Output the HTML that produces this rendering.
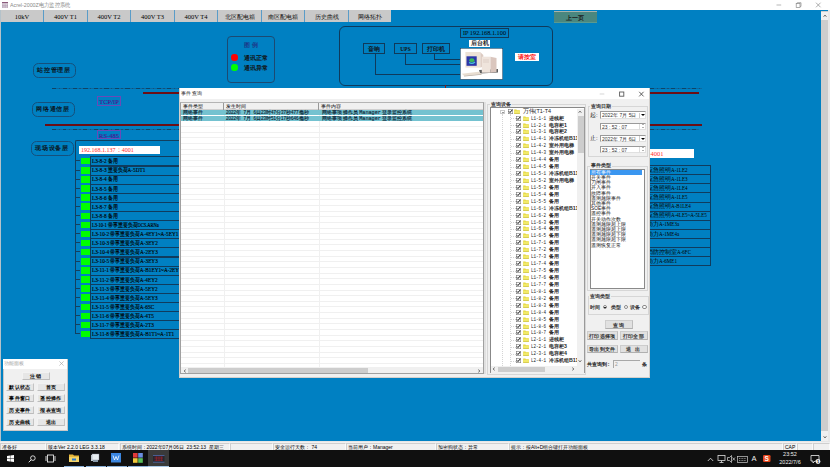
<!DOCTYPE html>
<html><head><meta charset="utf-8">
<style>
*{margin:0;padding:0;box-sizing:border-box}
html,body{width:830px;height:467px;overflow:hidden;background:#0080c2;font-family:"Liberation Sans",sans-serif;position:relative;font-weight:600}
.a{position:absolute}
.t{position:absolute;white-space:nowrap;line-height:1}
#title{left:0;top:0;width:830px;height:10px;background:#fff}
#tabs{left:0;top:10px;width:391px;height:12px;background:#c9c9c9}
.tab{position:absolute;top:0;height:12px;border-left:1px solid #5a9cc8;font-family:"Liberation Serif",serif;font-size:6.5px;color:#000;text-align:center;line-height:14px;font-weight:normal}
#vscroll{left:821px;top:10.5px;width:7px;height:431px;background:#cdcdcd}
#status{left:0;top:441px;width:830px;height:8.5px;background:#f0f0f0;border-top:1px solid #e6e6e6}
.sp{position:absolute;top:0.5px;height:7px;border-top:1px solid #cfcfcf;border-left:1px solid #cfcfcf;border-right:1px solid #fafafa;font-size:5px;color:#000;line-height:6px;padding-left:1px;white-space:nowrap;font-weight:normal}
#taskbar{left:0;top:449.5px;width:830px;height:17.5px;background:#101010}
.pill{position:absolute;border:1px solid #15507c;border-radius:5.5px;font-size:6px;color:#0a1420;text-align:center;letter-spacing:0.8px;font-weight:bold}
.dash{position:absolute;height:1px;background:repeating-linear-gradient(90deg,#0f4466 0 4px,#0a6aa2 4px 6.5px,#14507a 6.5px 7.8px,#0a6aa2 7.8px 10.5px)}
.red{position:absolute;height:2px;background:#6c0e14}
.pbox{position:absolute;border:1px solid #6a4ab8;font-family:"Liberation Serif",serif;font-size:6.5px;color:#4a1890;text-align:center;line-height:9px;font-weight:normal;-webkit-text-stroke:0.15px #4a1890}
.gsq{position:absolute;left:81px;width:8.5px;height:6.5px;background:#00ff00}
.row{position:absolute;left:90px;width:92px;height:10.1px;border:1px solid #103c5e;font-family:"Liberation Serif",serif;font-size:6.4px;color:#000;line-height:8px;white-space:nowrap;overflow:hidden;font-weight:normal}
.row span{position:absolute;left:0.6px;top:-0.2px;transform:scaleX(0.82);transform-origin:0 0;-webkit-text-stroke:0.15px #000}
.rrow{position:absolute;left:620px;width:90.5px;height:10.06px;border:1px solid #103c5e;font-family:"Liberation Serif",serif;font-size:7px;color:#000;line-height:8px;white-space:nowrap;overflow:hidden;font-weight:normal}
.rrow span{position:absolute;left:26px;top:-0.2px}
.rrow .cj{font-family:"Liberation Sans",sans-serif;font-size:6px;font-weight:normal}
.rrow .la{display:inline-block;font-weight:normal;font-size:7px;transform:scaleX(0.72);transform-origin:0 0}
.box{position:absolute;border:1px solid #103a5a;font-size:5.5px;color:#111;text-align:center}
#dlg{left:179px;top:88px;width:471px;height:290px;background:#f0f0f0;border:1px solid #d4d0cc;border-top:none}
.btn{position:absolute;background:#e1e1e1;border:1px solid #cdcdcd;border-bottom-color:#b0b0b0;border-right-color:#bdbdbd;font-size:5px;letter-spacing:0.4px;color:#2a2a2a;text-align:center;line-height:7px;white-space:nowrap;font-weight:600}
.tr{position:absolute;left:495px;height:7px;width:82px;font-size:5.5px;line-height:7px;color:#111;white-space:nowrap;overflow:hidden}
.tr .hl{position:absolute;left:15.5px;top:3.5px;width:5px;height:0;border-top:0.8px dotted #d4d4d4}
.tr .cb{position:absolute;left:21.2px;top:1px;width:5px;height:5px}
.tr .fd{position:absolute;left:27.6px;top:1px;width:6px;height:5px}
.tr span{position:absolute;left:36px;top:0}
.tr .c{font-family:"Liberation Mono",monospace;font-size:6px;left:36px;font-weight:normal;color:#222;transform:scaleX(0.7);transform-origin:0 0}
.tr .n{left:54px;font-size:5.3px;font-weight:600;color:#2a2a2a}
.ev{position:absolute;left:590px;width:52px;height:5px;font-size:4.8px;line-height:5px;color:#111;font-weight:normal;white-space:nowrap;padding-left:1px}
.ev.sel{background:#3a96f0;color:#fff}
.inp.di{width:45.5px;height:7.5px;border-top:1px solid #9a9a9a;border-left:1px solid #9a9a9a;border-right:1px solid #e0e0e0;border-bottom:1px solid #e0e0e0;font-size:5px;line-height:6px;color:#333}
.di .dd{position:absolute;left:38px;top:0.3px;width:6px;height:5.5px;background:#fff;border-left:0.5px solid #ccc}
.di .dd:after{content:"";position:absolute;left:1px;top:1.8px;border-left:2px solid transparent;border-right:2px solid transparent;border-top:2.2px solid #000}
.di .sp2{position:absolute;left:38px;top:0;width:6px;height:6px;border-left:0.5px solid #ddd}
.di .sp2:before{content:"";position:absolute;left:1.5px;top:0.6px;border-left:1.4px solid transparent;border-right:1.4px solid transparent;border-bottom:1.4px solid #666}
.di .sp2:after{content:"";position:absolute;left:1.5px;top:3.6px;border-left:1.4px solid transparent;border-right:1.4px solid transparent;border-top:1.4px solid #666}
.rad{position:absolute;top:304.8px;width:4.5px;height:4.5px;border-radius:50%;border:0.6px solid #8a8a8a;background:#fff}
.rad i{position:absolute;left:0.9px;top:0.9px;width:1.6px;height:1.6px;border-radius:50%;background:#111}
.grp{position:absolute;border:1px solid #d6d6d6}
.gl{position:absolute;font-size:5.5px;color:#333;background:#f0f0f0;padding:0 1px;line-height:6px;white-space:nowrap;font-weight:600}
.inp{position:absolute;background:#fff;border:1px solid #8a8a8a;font-size:5px;color:#222;line-height:6px;padding-left:1px;white-space:nowrap;font-weight:normal}
.fb{position:absolute;background:#e6e6e6;border:1px solid #f2f2f2;border-bottom-color:#bcbcbc;border-right-color:#c4c4c4;font-size:5px;letter-spacing:0.45px;color:#000;text-align:center;line-height:7px;white-space:nowrap;font-weight:600}
</style></head><body>
<svg width="0" height="0" style="position:absolute"><defs>
<symbol id="ck" viewBox="0 0 5 5"><rect x="0.3" y="0.3" width="4.4" height="4.4" fill="#fff" stroke="#7a7a7a" stroke-width="0.6"/><path d="M0.9 2.4 L2 3.5 L4.1 1.1" stroke="#000" stroke-width="1" fill="none" stroke-linejoin="miter"/></symbol>
<symbol id="fd" viewBox="0 0 6 5"><path d="M0.2 0.6 H2.4 L3 1.2 H5.8 V4.8 H0.2Z" fill="#e2d23a"/><rect x="0.2" y="1.6" width="5.6" height="3.2" fill="#f2ea6a"/><path d="M0.2 4.8 H5.8" stroke="#a89a28" stroke-width="0.5"/></symbol>
</defs></svg>
<div id="title" class="a">
  <svg class="a" style="left:1.5px;top:2px" width="6" height="6" viewBox="0 0 6 6"><rect x="0" y="0" width="6" height="6" fill="#ece4ec"/><rect x="0" y="0" width="6" height="1.2" fill="#8a5a7a"/><path d="M0.3 1.5 V6 M2 1.5 V6 M3.8 1.5 V6 M5.6 1.5 V6 M0 3.3 H6 M0 5 H6" stroke="#a08aa0" stroke-width="0.5"/></svg>
  <div class="t" style="left:10px;top:2px;font-size:6px;color:#8a8a8a;font-weight:normal;transform:scaleX(0.88);transform-origin:0 0">Acrel-2000Z电力监控系统</div>
  <svg class="a" style="left:776px;top:1.5px" width="46" height="7" viewBox="0 0 46 7"><path d="M0.5 3 H5.2" stroke="#9a9a9a" stroke-width="0.7"/><rect x="20.2" y="1.6" width="3.8" height="3.8" fill="none" stroke="#8a8a8a" stroke-width="0.7"/><path d="M21.3 1.6 V0.7 H25 V4.4 H24" fill="none" stroke="#8a8a8a" stroke-width="0.7"/><path d="M40 0.7 L44.6 5.3 M44.6 0.7 L40 5.3" stroke="#8a8a8a" stroke-width="0.7"/></svg>
</div>
<div id="tabs" class="a">
  <div class="tab" style="left:0;width:43px;border-left:1px solid #333">10kV</div>
  <div class="tab" style="left:43px;width:44px">400V T1</div>
  <div class="tab" style="left:87px;width:43px">400V T2</div>
  <div class="tab" style="left:130px;width:44px">400V T3</div>
  <div class="tab" style="left:174px;width:43px">400V T4</div>
  <div class="tab" style="left:217px;width:44px;font-size:6px;color:#111">北区配电箱</div>
  <div class="tab" style="left:261px;width:43px;font-size:6px;color:#111">南区配电箱</div>
  <div class="tab" style="left:304px;width:44px;font-size:6px;color:#111">历史曲线</div>
  <div class="tab" style="left:348px;width:43px;font-size:6px;color:#111">网络拓扑</div>
</div>
<div class="a" style="left:0;top:10px;width:1px;height:431px;background:#b4c2ca"></div>
<div id="vscroll" class="a"><div class="a" style="left:0;top:1px;width:7px;height:8px;background:#f0f0f0"></div><svg class="a" style="left:1.5px;top:3px" width="4" height="4" viewBox="0 0 4 4"><path d="M0.6 2.8 L2 1 L3.4 2.8" stroke="#505050" stroke-width="0.8" fill="none"/></svg></div>
<div class="a" style="left:828px;top:10px;width:2px;height:432px;background:#e8e8e8"></div>
<div class="a" style="left:821px;top:430.5px;width:7px;height:10.5px;background:#f0f0f0"><svg class="a" style="left:1.5px;top:4.5px" width="4" height="4" viewBox="0 0 4 4"><path d="M0.6 1.2 L2 3 L3.4 1.2" stroke="#505050" stroke-width="0.8" fill="none"/></svg></div>

<!-- upper page button -->
<div class="a" style="left:553.5px;top:10.5px;width:43px;height:12px;background:#4a877f;border-top:1px solid #a9b3ad;border-bottom:1px solid #5a9a90;font-size:6px;color:#1a1a1a;text-align:center;line-height:13px">上一页</div>

<!-- legend -->
<div class="a" style="left:227px;top:36px;width:48px;height:47px;border:1px solid #1c4a72;border-radius:4px"></div>
<div class="t" style="left:244px;top:42px;font-size:6px;color:#1c3a8a">图 例</div>
<div class="a" style="left:231.3px;top:54.2px;width:6.5px;height:6.5px;border-radius:50%;background:#ff0000"></div>
<div class="a" style="left:231.3px;top:64.2px;width:6.5px;height:6.5px;border-radius:50%;background:#00ff00"></div>
<div class="t" style="left:244px;top:55px;font-size:6px;color:#111">通讯正常</div>
<div class="t" style="left:244px;top:65px;font-size:6px;color:#111">通讯异常</div>

<!-- big network box -->
<div class="a" style="left:339px;top:26px;width:214px;height:60px;border:1px solid #0f3a5c;border-radius:6px"></div>
<div class="box" style="left:460px;top:28px;width:49px;height:10px;font-family:'Liberation Serif',serif;font-size:6.3px;line-height:8.5px;font-weight:normal;color:#000">IP 192.168.1.100</div>
<div class="a" style="left:469px;top:39.5px;width:21px;height:7px;background:#fff;font-size:5.5px;color:#111;text-align:center;line-height:7px">后台机</div>
<div class="box" style="left:363px;top:42.5px;width:22px;height:11px;line-height:10px">音响</div>
<div class="box" style="left:394px;top:42.5px;width:23px;height:11px;line-height:10px;font-family:'Liberation Serif',serif">UPS</div>
<div class="box" style="left:421.5px;top:42.5px;width:28px;height:11px;line-height:10px">打印机</div>
<div class="a" style="left:375px;top:53.5px;width:1px;height:21px;background:#0f3a5c"></div>
<div class="a" style="left:375px;top:74px;width:85px;height:1px;background:#0f3a5c"></div>
<div class="a" style="left:405px;top:53.5px;width:1px;height:11px;background:#0f3a5c"></div>
<div class="a" style="left:405px;top:64px;width:55px;height:1px;background:#0f3a5c"></div>
<div class="a" style="left:434px;top:53.5px;width:1px;height:6px;background:#0f3a5c"></div>
<div class="a" style="left:434px;top:59px;width:26px;height:1px;background:#0f3a5c"></div>
<!-- computer icon -->
<svg class="a" style="left:459.5px;top:47.5px" width="43" height="32" viewBox="0 0 43 32">
  <rect x="0.2" y="0.2" width="42.6" height="31.4" fill="#fff" stroke="#0a3050" stroke-width="0.6"/>
  <path d="M19 22 L38 21 L38 24.5 L20 25.5Z" fill="#2a2a2a" opacity="0.75"/>
  <rect x="5.4" y="4" width="15" height="15.6" fill="#ece2d6"/>
  <path d="M20.4 4.3 L23.3 7 L23.3 18.5 L20.4 19.6Z" fill="#dccbc2"/>
  <rect x="6.5" y="8.3" width="10.2" height="9.5" fill="#2a36a8"/>
  <ellipse cx="11.8" cy="12.3" rx="2.6" ry="2" fill="#3cb85a"/>
  <path d="M9 14.5 Q12 16.5 15 14" stroke="#48c8d8" stroke-width="1.2" fill="none"/>
  <rect x="21.8" y="8.7" width="8.7" height="16" fill="#efe4dc"/>
  <path d="M30.5 8.7 L36.5 10 L36.5 24 L30.5 24.7Z" fill="#dac6be"/>
  <path d="M23 12 H29 M23 14 H29" stroke="#cbbab2" stroke-width="0.5"/>
  <path d="M1.8 25.8 L18.5 23.8 L21.5 26 L4 27.8Z" fill="#e8ddd0"/>
  <path d="M4 27.8 L21.5 26 L21.5 26.8 L4.2 28.6Z" fill="#b8aca0"/>
</svg>
<div class="a" style="left:515px;top:52.5px;width:24px;height:8px;background:#fff;font-size:5.5px;color:#ff1010;text-align:center;line-height:8px">请按室</div>
<div class="a" style="left:445px;top:85px;width:1px;height:3px;background:#8a1a1a"></div>

<!-- layer pills -->
<div class="pill" style="left:32.5px;top:63px;width:43px;height:15px;line-height:13px">站控管理层</div>
<div class="pill" style="left:31.5px;top:102px;width:43px;height:15px;line-height:13px">网络通信层</div>
<div class="pill" style="left:30.5px;top:140.5px;width:43px;height:15px;line-height:13px">现场设备层</div>

<div class="dash" style="left:52px;top:87.5px;width:650px"></div>
<div class="dash" style="left:52px;top:128.5px;width:647px"></div>
<div class="red" style="left:143px;top:92.3px;width:556px"></div>
<div class="red" style="left:45px;top:124px;width:657px"></div>
<div class="pbox" style="left:97px;top:96px;width:24px;height:9.5px">TCP/IP</div>
<div class="pbox" style="left:97px;top:129.5px;width:24px;height:9.5px">RS-485</div>

<!-- left device panel -->
<div class="a" style="left:75px;top:140px;width:110px;height:194px;border-left:1px solid #12405f;border-top:1px solid #12405f;border-radius:2px 0 0 0"></div>
<div class="a" style="left:79px;top:145.8px;width:81px;height:8.5px;background:#fff;font-family:'Liberation Serif',serif;font-size:7px;color:#ff2a2a;line-height:9px;padding-left:1.5px;font-weight:normal"><span style="display:inline-block;transform:scaleX(0.86);transform-origin:0 0">192.168.1.137：4001</span></div>
<div class="a" style="left:76px;top:160.40px;width:4px;height:1px;background:#14405f"></div>
<div class="gsq" style="top:157.90px"></div>
<div class="row" style="top:156.40px"><span>L3-8-2 备用</span></div>
<div class="a" style="left:76px;top:169.50px;width:4px;height:1px;background:#14405f"></div>
<div class="gsq" style="top:167.00px"></div>
<div class="row" style="top:165.50px"><span>L3-8-3 重要负荷A-5DT1</span></div>
<div class="a" style="left:76px;top:178.60px;width:4px;height:1px;background:#14405f"></div>
<div class="gsq" style="top:176.10px"></div>
<div class="row" style="top:174.60px"><span>L3-8-4 备用</span></div>
<div class="a" style="left:76px;top:187.70px;width:4px;height:1px;background:#14405f"></div>
<div class="gsq" style="top:185.20px"></div>
<div class="row" style="top:183.70px"><span>L3-8-5 备用</span></div>
<div class="a" style="left:76px;top:196.80px;width:4px;height:1px;background:#14405f"></div>
<div class="gsq" style="top:194.30px"></div>
<div class="row" style="top:192.80px"><span>L3-8-6 备用</span></div>
<div class="a" style="left:76px;top:205.90px;width:4px;height:1px;background:#14405f"></div>
<div class="gsq" style="top:203.40px"></div>
<div class="row" style="top:201.90px"><span>L3-8-7 备用</span></div>
<div class="a" style="left:76px;top:215.00px;width:4px;height:1px;background:#14405f"></div>
<div class="gsq" style="top:212.50px"></div>
<div class="row" style="top:211.00px"><span>L3-8-8 备用</span></div>
<div class="a" style="left:76px;top:224.10px;width:4px;height:1px;background:#14405f"></div>
<div class="gsq" style="top:221.60px"></div>
<div class="row" style="top:220.10px;font-size:5.5px"><span style="top:0.3px">L3-10-1 带事重要负荷DCS.ARNa</span></div>
<div class="a" style="left:76px;top:233.20px;width:4px;height:1px;background:#14405f"></div>
<div class="gsq" style="top:230.70px"></div>
<div class="row" style="top:229.20px"><span>L3-10-2 带事重要负荷A-4EY1~A-5EY1</span></div>
<div class="a" style="left:76px;top:242.30px;width:4px;height:1px;background:#14405f"></div>
<div class="gsq" style="top:239.80px"></div>
<div class="row" style="top:238.30px"><span>L3-10-3 带事重要负荷A-3EY2</span></div>
<div class="a" style="left:76px;top:251.40px;width:4px;height:1px;background:#14405f"></div>
<div class="gsq" style="top:248.90px"></div>
<div class="row" style="top:247.40px"><span>L3-10-4 带事重要负荷A-2EY3</span></div>
<div class="a" style="left:76px;top:260.50px;width:4px;height:1px;background:#14405f"></div>
<div class="gsq" style="top:258.00px"></div>
<div class="row" style="top:256.50px"><span>L3-10-5 带事重要负荷A-3EY3</span></div>
<div class="a" style="left:76px;top:269.60px;width:4px;height:1px;background:#14405f"></div>
<div class="gsq" style="top:267.10px"></div>
<div class="row" style="top:265.60px"><span>L3-11-1 带事重要负荷A-B1EY1~A-2EY</span></div>
<div class="a" style="left:76px;top:278.70px;width:4px;height:1px;background:#14405f"></div>
<div class="gsq" style="top:276.20px"></div>
<div class="row" style="top:274.70px"><span>L3-11-2 带事重要负荷A-4EY2</span></div>
<div class="a" style="left:76px;top:287.80px;width:4px;height:1px;background:#14405f"></div>
<div class="gsq" style="top:285.30px"></div>
<div class="row" style="top:283.80px"><span>L3-11-3 带事重要负荷A-5EY2</span></div>
<div class="a" style="left:76px;top:296.90px;width:4px;height:1px;background:#14405f"></div>
<div class="gsq" style="top:294.40px"></div>
<div class="row" style="top:292.90px"><span>L3-11-4 带事重要负荷A-5EY3</span></div>
<div class="a" style="left:76px;top:306.00px;width:4px;height:1px;background:#14405f"></div>
<div class="gsq" style="top:303.50px"></div>
<div class="row" style="top:302.00px"><span>L3-11-5 带事重要负荷A-6SC</span></div>
<div class="a" style="left:76px;top:315.10px;width:4px;height:1px;background:#14405f"></div>
<div class="gsq" style="top:312.60px"></div>
<div class="row" style="top:311.10px"><span>L3-11-6 带事重要负荷A-4T5</span></div>
<div class="a" style="left:76px;top:324.20px;width:4px;height:1px;background:#14405f"></div>
<div class="gsq" style="top:321.70px"></div>
<div class="row" style="top:320.20px"><span>L3-11-7 带事重要负荷A-2T3</span></div>
<div class="a" style="left:76px;top:333.30px;width:4px;height:1px;background:#14405f"></div>
<div class="gsq" style="top:330.80px"></div>
<div class="row" style="top:329.30px"><span>L3-11-8 带事重要负荷A-B1T1~A-1T1</span></div>

<!-- right device panel -->
<div class="a" style="left:630px;top:149px;width:64px;height:9px;background:#fff;font-family:'Liberation Serif',serif;font-size:6.5px;color:#ff2a2a;line-height:9px;padding-left:20.5px;font-weight:normal">4001</div>
<div class="rrow" style="top:165.30px"><span><b class="cj">应急照明</b><b class="la">A-1LE2</b></span></div>
<div class="rrow" style="top:174.36px"><span><b class="cj">应急照明</b><b class="la">A-1LE3</b></span></div>
<div class="rrow" style="top:183.42px"><span><b class="cj">应急照明</b><b class="la">A-1LE4</b></span></div>
<div class="rrow" style="top:192.48px"><span><b class="cj">应急照明</b><b class="la">A-1LE5</b></span></div>
<div class="rrow" style="top:201.54px"><span><b class="cj">应急照明</b><b class="la">A-B1LE4</b></span></div>
<div class="rrow" style="top:210.60px"><span><b class="cj">应急照明</b><b class="la">A-4LE5~A-5LE5</b></span></div>
<div class="rrow" style="top:219.66px"><span><b class="cj">动力</b><b class="la">A-1ME3a</b></span></div>
<div class="rrow" style="top:228.72px"><span><b class="cj">动力</b><b class="la">A-1ME4a</b></span></div>
<div class="rrow" style="top:237.78px"><span><b class="cj"></b><b class="la"></b></span></div>
<div class="rrow" style="top:246.84px"><span><b class="cj">消防控制室</b><b class="la">A-6FC</b></span></div>
<div class="rrow" style="top:255.90px"><span><b class="cj">动力</b><b class="la">A-6ME1</b></span></div>

<!-- dialog -->
<div id="dlg" class="a">
  <div class="a" style="left:0;top:0;width:469px;height:11px;background:#fff"></div>
  <div class="t" style="left:1px;top:3px;font-size:5px;color:#222;font-weight:normal;letter-spacing:0.3px">事件查询</div>
  <svg class="a" style="left:419px;top:2.5px" width="46" height="7" viewBox="0 0 46 7"><path d="M0.7 3 H5.3" stroke="#c4c4c4" stroke-width="0.7"/><rect x="20.6" y="1" width="4.2" height="4.2" fill="none" stroke="#5a5a5a" stroke-width="0.9"/><path d="M40.2 0.8 L44.6 5.4 M44.6 0.8 L40.2 5.4" stroke="#3a3a3a" stroke-width="0.8"/></svg>
</div>
<!-- list control -->
<div class="a" style="left:180px;top:102px;width:304px;height:272px;background:#fff;border:1px solid #a0a0a0;border-top:1.5px solid #b4b4b4;overflow:hidden">
  <div class="a" style="left:0;top:0;width:302px;height:6.5px;background:#f0f0f0;border-bottom:1px solid #d0d0d0"></div>
  <div class="a" style="left:41.5px;top:0;width:1px;height:6.5px;background:#999"></div>
  <div class="a" style="left:137px;top:0;width:1px;height:6.5px;background:#999"></div>
  <div class="t" style="left:2px;top:1px;font-size:5px;color:#000;font-weight:normal">事件类型</div>
  <div class="t" style="left:45px;top:1px;font-size:5px;color:#000;font-weight:normal">发生时间</div>
  <div class="t" style="left:140px;top:1px;font-size:5px;color:#000;font-weight:normal">事件内容</div>
  <div class="a" style="left:0;top:23.20px;width:302px;height:1px;background:#f0f0f0"></div>
<div class="a" style="left:0;top:28.83px;width:302px;height:1px;background:#f0f0f0"></div>
<div class="a" style="left:0;top:34.47px;width:302px;height:1px;background:#f0f0f0"></div>
<div class="a" style="left:0;top:40.10px;width:302px;height:1px;background:#f0f0f0"></div>
<div class="a" style="left:0;top:45.73px;width:302px;height:1px;background:#f0f0f0"></div>
<div class="a" style="left:0;top:51.37px;width:302px;height:1px;background:#f0f0f0"></div>
<div class="a" style="left:0;top:57.00px;width:302px;height:1px;background:#f0f0f0"></div>
<div class="a" style="left:0;top:62.63px;width:302px;height:1px;background:#f0f0f0"></div>
<div class="a" style="left:0;top:68.26px;width:302px;height:1px;background:#f0f0f0"></div>
<div class="a" style="left:0;top:73.90px;width:302px;height:1px;background:#f0f0f0"></div>
<div class="a" style="left:0;top:79.53px;width:302px;height:1px;background:#f0f0f0"></div>
<div class="a" style="left:0;top:85.16px;width:302px;height:1px;background:#f0f0f0"></div>
<div class="a" style="left:0;top:90.80px;width:302px;height:1px;background:#f0f0f0"></div>
<div class="a" style="left:0;top:96.43px;width:302px;height:1px;background:#f0f0f0"></div>
<div class="a" style="left:0;top:102.06px;width:302px;height:1px;background:#f0f0f0"></div>
<div class="a" style="left:0;top:107.69px;width:302px;height:1px;background:#f0f0f0"></div>
<div class="a" style="left:0;top:113.33px;width:302px;height:1px;background:#f0f0f0"></div>
<div class="a" style="left:0;top:118.96px;width:302px;height:1px;background:#f0f0f0"></div>
<div class="a" style="left:0;top:124.59px;width:302px;height:1px;background:#f0f0f0"></div>
<div class="a" style="left:0;top:130.23px;width:302px;height:1px;background:#f0f0f0"></div>
<div class="a" style="left:0;top:135.86px;width:302px;height:1px;background:#f0f0f0"></div>
<div class="a" style="left:0;top:141.49px;width:302px;height:1px;background:#f0f0f0"></div>
<div class="a" style="left:0;top:147.13px;width:302px;height:1px;background:#f0f0f0"></div>
<div class="a" style="left:0;top:152.76px;width:302px;height:1px;background:#f0f0f0"></div>
<div class="a" style="left:0;top:158.39px;width:302px;height:1px;background:#f0f0f0"></div>
<div class="a" style="left:0;top:164.03px;width:302px;height:1px;background:#f0f0f0"></div>
<div class="a" style="left:0;top:169.66px;width:302px;height:1px;background:#f0f0f0"></div>
<div class="a" style="left:0;top:175.29px;width:302px;height:1px;background:#f0f0f0"></div>
<div class="a" style="left:0;top:180.92px;width:302px;height:1px;background:#f0f0f0"></div>
<div class="a" style="left:0;top:186.56px;width:302px;height:1px;background:#f0f0f0"></div>
<div class="a" style="left:0;top:192.19px;width:302px;height:1px;background:#f0f0f0"></div>
<div class="a" style="left:0;top:197.82px;width:302px;height:1px;background:#f0f0f0"></div>
<div class="a" style="left:0;top:203.46px;width:302px;height:1px;background:#f0f0f0"></div>
<div class="a" style="left:0;top:209.09px;width:302px;height:1px;background:#f0f0f0"></div>
<div class="a" style="left:0;top:214.72px;width:302px;height:1px;background:#f0f0f0"></div>
<div class="a" style="left:0;top:220.36px;width:302px;height:1px;background:#f0f0f0"></div>
<div class="a" style="left:0;top:225.99px;width:302px;height:1px;background:#f0f0f0"></div>
<div class="a" style="left:0;top:231.62px;width:302px;height:1px;background:#f0f0f0"></div>
<div class="a" style="left:0;top:237.25px;width:302px;height:1px;background:#f0f0f0"></div>
<div class="a" style="left:0;top:242.89px;width:302px;height:1px;background:#f0f0f0"></div>
<div class="a" style="left:0;top:248.52px;width:302px;height:1px;background:#f0f0f0"></div>
<div class="a" style="left:0;top:254.15px;width:302px;height:1px;background:#f0f0f0"></div>
<div class="a" style="left:0;top:259.79px;width:302px;height:1px;background:#f0f0f0"></div>
  <div class="a" style="left:42.5px;top:7px;width:1px;height:257px;background:#f0f0f0"></div>
  <div class="a" style="left:137.5px;top:7px;width:1px;height:257px;background:#f0f0f0"></div>
  <div class="a" style="left:0;top:7.3px;width:302px;height:5.2px;background:#74c2d0"></div>
  <div class="a" style="left:0;top:13.2px;width:302px;height:5.2px;background:#74c2d0"></div>
  <div class="t" style="left:2px;top:7.7px;font-size:4.8px;color:#0c2434;font-weight:normal;-webkit-text-stroke:0.12px #0c2434">网络事件</div>
  <div class="t" style="left:2px;top:13.5px;font-size:4.8px;color:#0c2434;font-weight:normal;-webkit-text-stroke:0.12px #0c2434">网络事件</div>
  <div class="t" style="left:45px;top:7.7px;font-size:4.5px;color:#0c2434;font-weight:normal;-webkit-text-stroke:0.12px #0c2434">2022年 &nbsp;7月 &nbsp;6日23时47分37秒477毫秒</div>
  <div class="t" style="left:45px;top:13.5px;font-size:4.5px;color:#0c2434;font-weight:normal;-webkit-text-stroke:0.12px #0c2434">2022年 &nbsp;7月 &nbsp;6日23时51分17秒646毫秒</div>
  <div class="t" style="left:140.5px;top:7.7px;font-size:4.8px;color:#0c2434;font-weight:normal;-webkit-text-stroke:0.12px #0c2434">网络事项 操作员 <span style="font-family:'Liberation Mono',monospace;font-size:5.2px">Manager</span> 登录监控系统</div>
  <div class="t" style="left:140.5px;top:13.5px;font-size:4.8px;color:#0c2434;font-weight:normal;-webkit-text-stroke:0.12px #0c2434">网络事项 操作员 <span style="font-family:'Liberation Mono',monospace;font-size:5.2px">Manager</span> 登录监控系统</div>
  <!-- h scroll -->
  <div class="a" style="left:0;top:264px;width:302px;height:7px;background:#f0f0f0"></div>
  <div class="a" style="left:7px;top:265px;width:180px;height:5px;background:#cdcdcd"></div>
  <svg class="a" style="left:1.5px;top:265.5px" width="4" height="4" viewBox="0 0 4 4"><path d="M2.8 0.6 L1 2 L2.8 3.4" stroke="#606060" stroke-width="0.8" fill="none"/></svg>
  <svg class="a" style="left:296px;top:265.5px" width="4" height="4" viewBox="0 0 4 4"><path d="M1.2 0.6 L3 2 L1.2 3.4" stroke="#606060" stroke-width="0.8" fill="none"/></svg>
</div>
<div class="a" style="left:484px;top:102px;width:2px;height:272px;background:#e0e0e0"></div>

<!-- device tree group -->
<div class="grp" style="left:486.5px;top:103.5px;width:99px;height:271px"></div>
<div class="gl" style="left:489.5px;top:100.8px;font-size:5px">查询设备</div>
<div class="a" style="left:489.5px;top:107px;width:95px;height:266px;background:#fff;border:1px solid #9a9a9a;border-left:1.5px solid #888;border-top:1.5px solid #888;overflow:hidden"></div>
<div class="a" style="left:500px;top:109.5px;width:4.6px;height:4.4px;border:0.6px solid #cacaca;background:#fff"><div class="a" style="left:1px;top:1.6px;width:2px;height:0.6px;background:#999"></div></div>
<div class="a" style="left:502px;top:114px;width:0;height:252px;border-left:0.8px dotted #d4d4d4"></div>
<div class="a" style="left:510.4px;top:114px;width:0;height:252px;border-left:0.8px dotted #d4d4d4"></div>
<div class="tr" style="top:107.8px"><svg class="cb" style="left:13.2px"><use href="#ck"/></svg><svg class="fd" style="left:19.3px"><use href="#fd"/></svg><span style="left:27.6px;font-weight:normal;font-size:5.5px;color:#222">万伟(T1-T4</span></div>
<div class="tr" style="top:114.60px"><i class="hl"></i><svg class="cb"><use href="#ck"/></svg><svg class="fd"><use href="#fd"/></svg><span class="c">L1-1-1</span><span class="n">进线柜</span></div>
<div class="tr" style="top:121.53px"><i class="hl"></i><svg class="cb"><use href="#ck"/></svg><svg class="fd"><use href="#fd"/></svg><span class="c">L1-2-1</span><span class="n">电容柜1</span></div>
<div class="tr" style="top:128.46px"><i class="hl"></i><svg class="cb"><use href="#ck"/></svg><svg class="fd"><use href="#fd"/></svg><span class="c">L1-3-1</span><span class="n">电容柜2</span></div>
<div class="tr" style="top:135.39px"><i class="hl"></i><svg class="cb"><use href="#ck"/></svg><svg class="fd"><use href="#fd"/></svg><span class="c">L1-4-1</span><span class="n">冷冻机组B11</span></div>
<div class="tr" style="top:142.32px"><i class="hl"></i><svg class="cb"><use href="#ck"/></svg><svg class="fd"><use href="#fd"/></svg><span class="c">L1-4-2</span><span class="n">室外用电梯</span></div>
<div class="tr" style="top:149.25px"><i class="hl"></i><svg class="cb"><use href="#ck"/></svg><svg class="fd"><use href="#fd"/></svg><span class="c">L1-4-3</span><span class="n">室外用电梯</span></div>
<div class="tr" style="top:156.18px"><i class="hl"></i><svg class="cb"><use href="#ck"/></svg><svg class="fd"><use href="#fd"/></svg><span class="c">L1-4-4</span><span class="n">备用</span></div>
<div class="tr" style="top:163.11px"><i class="hl"></i><svg class="cb"><use href="#ck"/></svg><svg class="fd"><use href="#fd"/></svg><span class="c">L1-4-5</span><span class="n">备用</span></div>
<div class="tr" style="top:170.04px"><i class="hl"></i><svg class="cb"><use href="#ck"/></svg><svg class="fd"><use href="#fd"/></svg><span class="c">L1-5-1</span><span class="n">冷冻机组B11</span></div>
<div class="tr" style="top:176.97px"><i class="hl"></i><svg class="cb"><use href="#ck"/></svg><svg class="fd"><use href="#fd"/></svg><span class="c">L1-5-2</span><span class="n">室外用电梯</span></div>
<div class="tr" style="top:183.90px"><i class="hl"></i><svg class="cb"><use href="#ck"/></svg><svg class="fd"><use href="#fd"/></svg><span class="c">L1-5-3</span><span class="n">备用</span></div>
<div class="tr" style="top:190.83px"><i class="hl"></i><svg class="cb"><use href="#ck"/></svg><svg class="fd"><use href="#fd"/></svg><span class="c">L1-5-4</span><span class="n">备用</span></div>
<div class="tr" style="top:197.76px"><i class="hl"></i><svg class="cb"><use href="#ck"/></svg><svg class="fd"><use href="#fd"/></svg><span class="c">L1-5-5</span><span class="n">备用</span></div>
<div class="tr" style="top:204.69px"><i class="hl"></i><svg class="cb"><use href="#ck"/></svg><svg class="fd"><use href="#fd"/></svg><span class="c">L1-6-1</span><span class="n">冷冻机组B11</span></div>
<div class="tr" style="top:211.62px"><i class="hl"></i><svg class="cb"><use href="#ck"/></svg><svg class="fd"><use href="#fd"/></svg><span class="c">L1-6-2</span><span class="n">备用</span></div>
<div class="tr" style="top:218.55px"><i class="hl"></i><svg class="cb"><use href="#ck"/></svg><svg class="fd"><use href="#fd"/></svg><span class="c">L1-6-3</span><span class="n">备用</span></div>
<div class="tr" style="top:225.48px"><i class="hl"></i><svg class="cb"><use href="#ck"/></svg><svg class="fd"><use href="#fd"/></svg><span class="c">L1-6-4</span><span class="n">备用</span></div>
<div class="tr" style="top:232.41px"><i class="hl"></i><svg class="cb"><use href="#ck"/></svg><svg class="fd"><use href="#fd"/></svg><span class="c">L1-6-5</span><span class="n">备用</span></div>
<div class="tr" style="top:239.34px"><i class="hl"></i><svg class="cb"><use href="#ck"/></svg><svg class="fd"><use href="#fd"/></svg><span class="c">L1-7-1</span><span class="n">备用</span></div>
<div class="tr" style="top:246.27px"><i class="hl"></i><svg class="cb"><use href="#ck"/></svg><svg class="fd"><use href="#fd"/></svg><span class="c">L1-7-2</span><span class="n">备用</span></div>
<div class="tr" style="top:253.20px"><i class="hl"></i><svg class="cb"><use href="#ck"/></svg><svg class="fd"><use href="#fd"/></svg><span class="c">L1-7-3</span><span class="n">备用</span></div>
<div class="tr" style="top:260.13px"><i class="hl"></i><svg class="cb"><use href="#ck"/></svg><svg class="fd"><use href="#fd"/></svg><span class="c">L1-7-4</span><span class="n">备用</span></div>
<div class="tr" style="top:267.06px"><i class="hl"></i><svg class="cb"><use href="#ck"/></svg><svg class="fd"><use href="#fd"/></svg><span class="c">L1-7-5</span><span class="n">备用</span></div>
<div class="tr" style="top:273.99px"><i class="hl"></i><svg class="cb"><use href="#ck"/></svg><svg class="fd"><use href="#fd"/></svg><span class="c">L1-7-6</span><span class="n">备用</span></div>
<div class="tr" style="top:280.92px"><i class="hl"></i><svg class="cb"><use href="#ck"/></svg><svg class="fd"><use href="#fd"/></svg><span class="c">L1-7-7</span><span class="n">备用</span></div>
<div class="tr" style="top:287.85px"><i class="hl"></i><svg class="cb"><use href="#ck"/></svg><svg class="fd"><use href="#fd"/></svg><span class="c">L1-8-1</span><span class="n">备用</span></div>
<div class="tr" style="top:294.78px"><i class="hl"></i><svg class="cb"><use href="#ck"/></svg><svg class="fd"><use href="#fd"/></svg><span class="c">L1-8-2</span><span class="n">备用</span></div>
<div class="tr" style="top:301.71px"><i class="hl"></i><svg class="cb"><use href="#ck"/></svg><svg class="fd"><use href="#fd"/></svg><span class="c">L1-8-3</span><span class="n">备用</span></div>
<div class="tr" style="top:308.64px"><i class="hl"></i><svg class="cb"><use href="#ck"/></svg><svg class="fd"><use href="#fd"/></svg><span class="c">L1-8-4</span><span class="n">备用</span></div>
<div class="tr" style="top:315.57px"><i class="hl"></i><svg class="cb"><use href="#ck"/></svg><svg class="fd"><use href="#fd"/></svg><span class="c">L1-8-5</span><span class="n">备用</span></div>
<div class="tr" style="top:322.50px"><i class="hl"></i><svg class="cb"><use href="#ck"/></svg><svg class="fd"><use href="#fd"/></svg><span class="c">L1-8-6</span><span class="n">备用</span></div>
<div class="tr" style="top:329.43px"><i class="hl"></i><svg class="cb"><use href="#ck"/></svg><svg class="fd"><use href="#fd"/></svg><span class="c">L1-8-7</span><span class="n">备用</span></div>
<div class="tr" style="top:336.36px"><i class="hl"></i><svg class="cb"><use href="#ck"/></svg><svg class="fd"><use href="#fd"/></svg><span class="c">L2-1-1</span><span class="n">进线柜</span></div>
<div class="tr" style="top:343.29px"><i class="hl"></i><svg class="cb"><use href="#ck"/></svg><svg class="fd"><use href="#fd"/></svg><span class="c">L2-2-1</span><span class="n">电容柜3</span></div>
<div class="tr" style="top:350.22px"><i class="hl"></i><svg class="cb"><use href="#ck"/></svg><svg class="fd"><use href="#fd"/></svg><span class="c">L2-3-1</span><span class="n">电容柜4</span></div>
<div class="tr" style="top:357.15px"><i class="hl"></i><svg class="cb"><use href="#ck"/></svg><svg class="fd"><use href="#fd"/></svg><span class="c">L2-4-1</span><span class="n">冷冻机组B11</span></div>
<!-- tree v scrollbar -->
<div class="a" style="left:577px;top:108.5px;width:7px;height:257px;background:#f0f0f0"></div>
<div class="a" style="left:577.5px;top:116px;width:6px;height:37px;background:#cdcdcd"></div>
<svg class="a" style="left:578.3px;top:110px" width="4" height="4" viewBox="0 0 4 4"><path d="M0.6 2.8 L2 1 L3.4 2.8" stroke="#606060" stroke-width="0.8" fill="none"/></svg>
<svg class="a" style="left:578.3px;top:359px" width="4" height="4" viewBox="0 0 4 4"><path d="M0.6 1.2 L2 3 L3.4 1.2" stroke="#606060" stroke-width="0.8" fill="none"/></svg>
<!-- tree h scrollbar -->
<div class="a" style="left:490.5px;top:365.5px;width:93px;height:7px;background:#f0f0f0"></div>
<div class="a" style="left:497.5px;top:366.5px;width:47px;height:5px;background:#cdcdcd"></div>
<svg class="a" style="left:492px;top:366.5px" width="4" height="4" viewBox="0 0 4 4"><path d="M2.8 0.6 L1 2 L2.8 3.4" stroke="#606060" stroke-width="0.8" fill="none"/></svg>
<svg class="a" style="left:571px;top:366.5px" width="4" height="4" viewBox="0 0 4 4"><path d="M1.2 0.6 L3 2 L1.2 3.4" stroke="#606060" stroke-width="0.8" fill="none"/></svg>

<!-- date group -->
<div class="grp" style="left:587.5px;top:105.5px;width:60px;height:51px"></div>
<div class="gl" style="left:589.5px;top:102.8px;font-size:5px">查询日期</div>
<div class="t" style="left:590px;top:112.3px;font-size:6px;color:#222;font-weight:normal">起:</div>
<div class="inp di" style="left:600px;top:111.3px">2022年 7月 5日<i class="dd"></i></div>
<div class="inp di" style="left:600px;top:122.5px">23 : 52 : 07<i class="sp2"></i></div>
<div class="t" style="left:590px;top:135.3px;font-size:6px;color:#222;font-weight:normal">止:</div>
<div class="inp di" style="left:600px;top:134.5px">2022年 7月 6日<i class="dd"></i></div>
<div class="inp di" style="left:600px;top:145.5px">23 : 52 : 07<i class="sp2"></i></div>

<!-- event type group -->
<div class="grp" style="left:587px;top:166px;width:61px;height:125px"></div>
<div class="gl" style="left:589.5px;top:162px;font-size:5px">事件类型</div>
<div class="a" style="left:589.5px;top:168.5px;width:55.5px;height:120px;background:#fff;border:1px solid #8a8a8a"></div>
<div class="ev sel" style="top:169.70px">所有事件</div>
<div class="ev" style="top:174.90px">开关事件</div>
<div class="ev" style="top:180.10px">刀闸事件</div>
<div class="ev" style="top:185.30px">开入事件</div>
<div class="ev" style="top:190.50px">故障事件</div>
<div class="ev" style="top:195.70px">遥测越限事件</div>
<div class="ev" style="top:200.90px">其他事件</div>
<div class="ev" style="top:206.10px">SOE事件</div>
<div class="ev" style="top:211.30px">遥控事件</div>
<div class="ev" style="top:216.50px">开关动作次数</div>
<div class="ev" style="top:221.70px">遥测越限超上限</div>
<div class="ev" style="top:226.90px">遥测越限超上限</div>
<div class="ev" style="top:232.10px">遥测越限超下限</div>
<div class="ev" style="top:237.30px">遥测越限超下限</div>
<div class="ev" style="top:242.50px">遥测恢复正常</div>

<!-- query type group -->
<div class="grp" style="left:587.5px;top:296px;width:61px;height:18.5px"></div>
<div class="gl" style="left:589px;top:293px;font-size:5px">查询类型</div>
<div class="t" style="left:590px;top:304.5px;font-size:5px;color:#333;font-weight:600">时间</div>
<div class="t" style="left:611px;top:304.5px;font-size:5px;color:#333;font-weight:600">类型</div>
<div class="t" style="left:630px;top:304.5px;font-size:5px;color:#333;font-weight:600">设备</div>
<div class="rad" style="left:602.5px"><i></i></div>
<div class="rad" style="left:623.5px"></div>
<div class="rad" style="left:642px"></div>

<div class="btn" style="left:604.5px;top:319.5px;width:28.5px;height:9px;line-height:8px">查询</div>
<div class="btn" style="left:587px;top:331px;width:30.5px;height:9px;line-height:8px">打印选择项</div>
<div class="btn" style="left:619.5px;top:331px;width:28px;height:9px;line-height:8px">打印全部</div>
<div class="btn" style="left:587px;top:344.5px;width:30.5px;height:8.5px;line-height:7.5px">导出到文件</div>
<div class="btn" style="left:619.5px;top:344.5px;width:28px;height:8.5px;line-height:7.5px">退 &nbsp;出</div>
<div class="t" style="left:586.5px;top:361.5px;font-size:5px;color:#111;font-weight:600;letter-spacing:0.3px">共查询到:</div>
<div class="a" style="left:613px;top:360.4px;width:27px;height:8px;background:#f0f0f0;border-top:1px solid #a8a8a8;border-left:1px solid #a8a8a8;font-size:5px;color:#999;line-height:7px;padding-left:1px;font-weight:normal">2</div>
<div class="t" style="left:642.3px;top:361.5px;font-size:5px;color:#222;font-weight:600">条</div>

<!-- function panel -->
<div class="a" style="left:2.5px;top:358.5px;width:65px;height:72.5px;background:#f0f0f0;border:1px solid #c8c8c8"></div>
<div class="a" style="left:3px;top:359px;width:64px;height:10px;background:#fff"></div>
<div class="t" style="left:4px;top:361.3px;font-size:5px;color:#9a9a9a;font-weight:normal">功能面板</div>
<svg class="a" style="left:58.5px;top:361px" width="5" height="5" viewBox="0 0 5 5"><path d="M0.4 0.4 L4.6 4.6 M4.6 0.4 L0.4 4.6" stroke="#a0a0a0" stroke-width="0.6"/></svg>
<div class="fb" style="left:21.5px;top:372px;width:28.5px;height:8px">注销</div>
<div class="fb" style="left:6px;top:382.5px;width:28px;height:8px">默认状态</div>
<div class="fb" style="left:37px;top:382.5px;width:28px;height:8px">首页</div>
<div class="fb" style="left:6px;top:394.2px;width:28px;height:8px">事件窗口</div>
<div class="fb" style="left:37px;top:394.2px;width:28px;height:8px">遥控操作</div>
<div class="fb" style="left:6px;top:406px;width:28px;height:8px">历史事件</div>
<div class="fb" style="left:37px;top:406px;width:28px;height:8px">报表查询</div>
<div class="fb" style="left:6px;top:418px;width:28px;height:8px">历史曲线</div>
<div class="fb" style="left:37px;top:418px;width:28px;height:8px">退出</div>

<!-- status bar -->
<div id="status" class="a">
  <div class="sp" style="left:0;width:46px">准备好</div>
  <div class="sp" style="left:46px;width:73px">版本Ver 2.2.0 LEG 3.3.18</div>
  <div class="sp" style="left:119.5px;width:110px">系统时间：2022年07月06日 &nbsp;23:52:13 &nbsp;星期三</div>
  <div class="sp" style="left:230px;width:43px"></div>
  <div class="sp" style="left:273px;width:73px">安全运行天数： 74</div>
  <div class="sp" style="left:346px;width:90px">当前用户：Manager</div>
  <div class="sp" style="left:436px;width:73px">加密狗状态：异常</div>
  <div class="sp" style="left:509px;width:274px">提示：按Alt+D组合键打开功能面板</div>
  <div class="sp" style="left:783px;width:14px">CAP</div>
  <div class="sp" style="left:797px;width:16px"></div>
  <div class="sp" style="left:813px;width:17px"></div>
</div>

<!-- taskbar -->
<div id="taskbar" class="a">
  <svg class="a" style="left:6.7px;top:5.8px" width="7" height="7" viewBox="0 0 9 9"><path d="M0 1.3 L3.8 0.7 V4.2 H0Z M4.3 0.6 L9 0 V4.2 H4.3Z M0 4.7 H3.8 V8.3 L0 7.7Z M4.3 4.7 H9 V9 L4.3 8.4Z" fill="#fff"/></svg>
  <svg class="a" style="left:27.5px;top:5px" width="8" height="8" viewBox="0 0 9 9"><circle cx="5.5" cy="3.5" r="2.6" stroke="#fff" stroke-width="0.9" fill="none"/><path d="M3.6 5.4 L0.8 8.2" stroke="#fff" stroke-width="1"/></svg>
  <svg class="a" style="left:45px;top:4px" width="11" height="9" viewBox="0 0 11 9"><rect x="2.5" y="1" width="6" height="7" stroke="#fff" stroke-width="0.8" fill="none"/><path d="M1 2 V7 M10 2 V7" stroke="#fff" stroke-width="0.8"/></svg>
  <svg class="a" style="left:69px;top:3px" width="10" height="10" viewBox="0 0 10 10"><path d="M0 1.5 H4 L5 2.5 H10 V9 H0Z" fill="#e8b83a"/><rect x="0" y="4" width="10" height="5" fill="#f5d468"/><rect x="3" y="5.5" width="4" height="2" fill="#2a7ad0"/></svg>
  <svg class="a" style="left:90px;top:3px" width="10" height="10" viewBox="0 0 10 10"><rect x="1" y="2" width="7" height="6" fill="#c8d4dc"/><rect x="2" y="1" width="7" height="6" fill="#e8eef2" stroke="#889" stroke-width="0.4"/><rect x="3" y="7" width="5" height="2" fill="#8899a8"/></svg>
  <svg class="a" style="left:111px;top:3.5px" width="10" height="10" viewBox="0 0 10 10"><rect x="0" y="0" width="10" height="9.5" fill="#3b86e0"/><path d="M2 2.5 L3.5 7 L5 3.5 L6.5 7 L8 2.5" stroke="#fff" stroke-width="0.8" fill="none"/></svg>
  <svg class="a" style="left:132.5px;top:3px" width="10" height="10" viewBox="0 0 10 10"><rect x="0" y="0" width="4.6" height="4.6" fill="#e23a3a"/><rect x="5.2" y="0" width="4.6" height="4.6" fill="#6a8ee0"/><rect x="0" y="5.2" width="4.6" height="4.6" fill="#f0c83a"/><rect x="5.2" y="5.2" width="4.6" height="4.6" fill="#5ac05a"/></svg>
  <div class="a" style="left:148px;top:0;width:21px;height:17px;background:#3a3a3a"></div>
  <svg class="a" style="left:153px;top:5.5px" width="11.5" height="7.5" viewBox="0 0 11.5 7.5"><rect x="0" y="0" width="11.5" height="7.5" fill="#262630"/><rect x="0" y="0" width="11.5" height="0.7" fill="#5a78c0"/><path d="M1.5 2.2 H10 M1.5 3.8 H10 M1.5 5.4 H10 M3.5 1.5 V6 M6 1.5 V6 M8.5 1.5 V6" stroke="#a02028" stroke-width="0.6"/><rect x="0" y="6.8" width="11.5" height="0.7" fill="#5a78c0"/></svg>
  <div class="a" style="left:64px;top:16px;width:20px;height:1px;background:#8ab0d8"></div>
  <div class="a" style="left:86px;top:16px;width:20px;height:1px;background:#8ab0d8"></div>
  <div class="a" style="left:107px;top:16px;width:20px;height:1px;background:#8ab0d8"></div>
  <div class="a" style="left:128px;top:16px;width:20px;height:1px;background:#8ab0d8"></div>
  <div class="a" style="left:148px;top:16px;width:21px;height:1px;background:#a8c8e8"></div>
  <svg class="a" style="left:706.5px;top:7px" width="7" height="5" viewBox="0 0 7 5"><path d="M0.8 4 L3.5 1.2 L6.2 4" stroke="#e8e8e8" stroke-width="0.8" fill="none"/></svg>
  <svg class="a" style="left:716.5px;top:5.5px" width="9" height="8" viewBox="0 0 9 8"><rect x="1" y="0.5" width="7" height="5" stroke="#ddd" stroke-width="0.8" fill="none"/><path d="M4.5 5.5 V7.5 M2.5 7.5 H6.5" stroke="#ddd" stroke-width="0.8"/></svg>
  <svg class="a" style="left:726.5px;top:5.5px" width="9" height="8" viewBox="0 0 9 8"><path d="M0.5 2.5 H2.5 L4.5 0.5 V7.5 L2.5 5.5 H0.5Z" fill="none" stroke="#ddd" stroke-width="0.7"/><path d="M5.5 2.5 L8 5.5 M8 2.5 L5.5 5.5" stroke="#ddd" stroke-width="0.7"/></svg>
  <svg class="a" style="left:737px;top:6px" width="11" height="7" viewBox="0 0 11 7"><rect x="0.5" y="0.5" width="10" height="6" stroke="#ccc" stroke-width="0.7" fill="none"/><path d="M2 2.5 H9 M2 4.5 H9" stroke="#ccc" stroke-width="0.6" stroke-dasharray="1 0.6"/></svg>
  <div class="t" style="left:751.5px;top:5.5px;font-size:7.5px;color:#eee;font-weight:normal">A</div>
  <svg class="a" style="left:763.3px;top:5.5px" width="7.5" height="7" viewBox="0 0 7.5 7"><rect x="0" y="0" width="7.5" height="7" rx="1.2" fill="#e8461c"/><text x="1.6" y="6.2" font-size="6.5" font-family="Liberation Sans" font-weight="bold" fill="#fff">S</text></svg>
  <div class="t" style="left:779px;top:2.3px;font-size:5.5px;color:#eee;font-weight:normal;width:22px;text-align:center">23:52</div>
  <div class="t" style="left:774px;top:10.8px;font-size:5.5px;color:#eee;font-weight:normal;width:32px;text-align:center">2022/7/6</div>
  <svg class="a" style="left:809.5px;top:4px" width="11" height="11" viewBox="0 0 11 11"><path d="M1 1.5 H9 V7 H5 L3 9 V7 H1Z" fill="none" stroke="#eee" stroke-width="0.8"/><circle cx="8" cy="7.5" r="2.4" fill="#eee"/><text x="6.9" y="9.2" font-size="4" fill="#111" font-family="Liberation Sans">1</text></svg>
</div>
</body></html>
